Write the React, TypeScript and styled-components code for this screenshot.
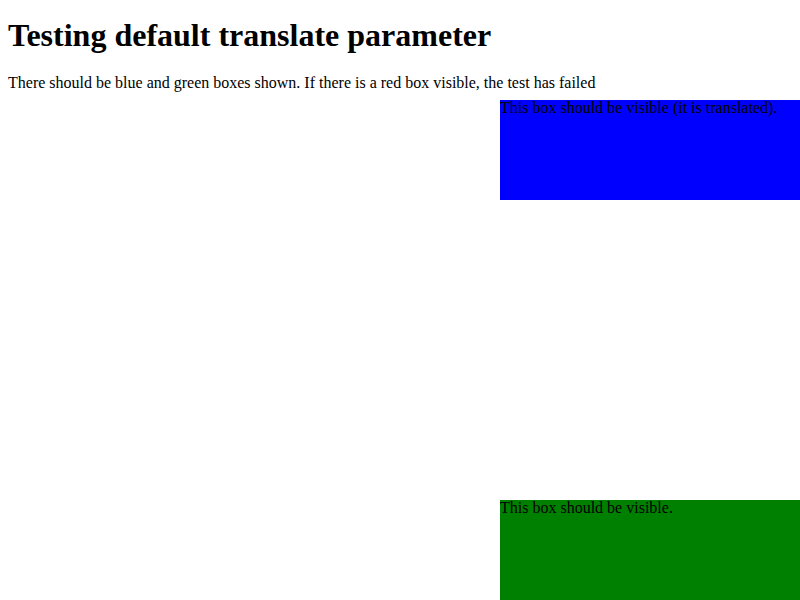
import styled, { createGlobalStyle } from "styled-components";

const GlobalStyle = createGlobalStyle`
  html, body {
    margin: 0;
    padding: 0;
    background: #ffffff;
  }

  body {
    font-family: "Liberation Serif", "Times New Roman", serif;
    color: #000000;
  }
`;

const App = () => {
  return (
    <Page>
      <GlobalStyle />
      <Intro>
        <Title>Testing default translate parameter</Title>
        <Note>
          There should be blue and green boxes shown. If there is a red box
          visible, the test has failed
        </Note>
      </Intro>
      <Stage>
        <TestBox $color="#0000ff">This box should be visible (it is translated).</TestBox>
        <TestBox $color="#008000">This box should be visible.</TestBox>
      </Stage>
    </Page>
  );
};

const Page = styled.div`
  width: 800px;
  height: 600px;
  overflow: hidden;
`;

const Intro = styled.header`
  height: 100px;
  padding: 0 8px;
  box-sizing: border-box;
  overflow: hidden;
`;

const Title = styled.h1`
  margin: 17px 0 0;
  font-size: 32px;
  line-height: 37px;
  font-weight: bold;
`;

const Note = styled.p`
  margin: 20px 0 0;
  font-size: 16px;
  line-height: 18px;
  white-space: nowrap;
`;

const Stage = styled.div`
  display: flex;
  flex-direction: column;
  align-items: flex-end;
  gap: 300px;
`;

const TestBox = styled.div<{ $color: string }>`
  width: 300px;
  height: 100px;
  background: ${(p) => p.$color};
  font-size: 16px;
  line-height: 16px;
`;

export default App;
